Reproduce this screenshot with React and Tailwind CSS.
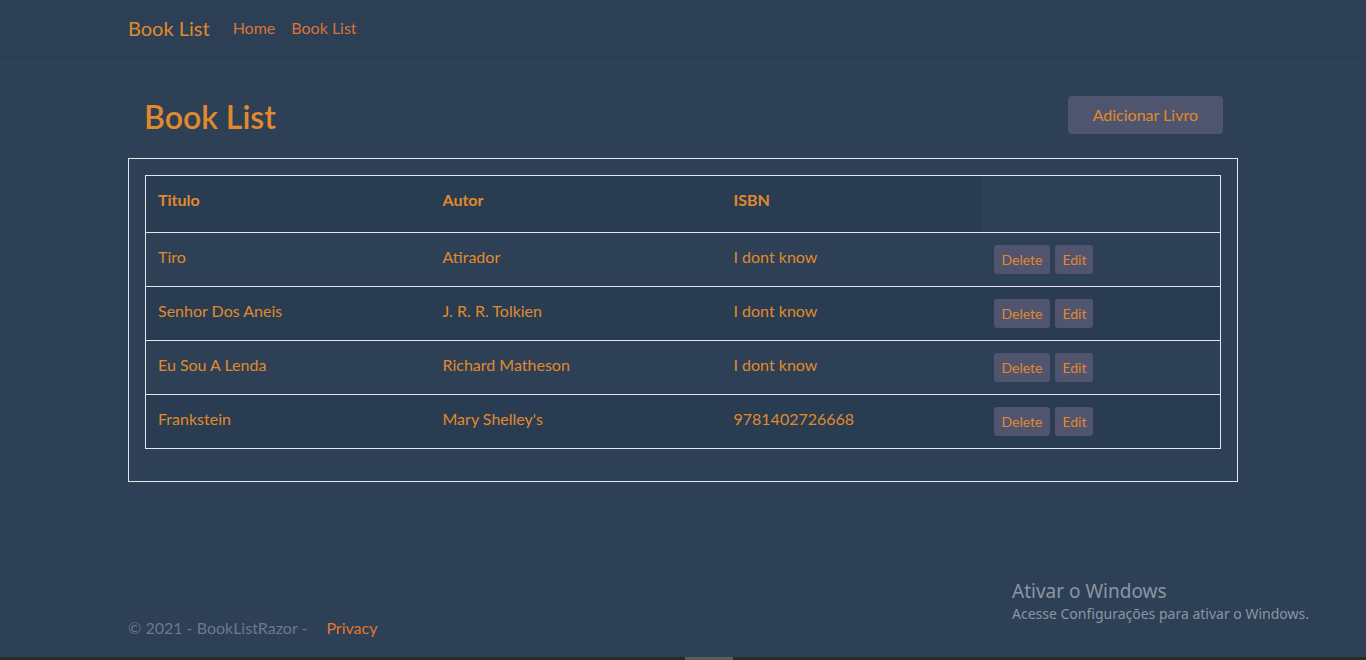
const books = [
  { title: 'Tiro', author: 'Atirador', isbn: 'I dont know' },
  { title: 'Senhor Dos Aneis', author: 'J. R. R. Tolkien', isbn: 'I dont know' },
  { title: 'Eu Sou A Lenda', author: 'Richard Matheson', isbn: 'I dont know' },
  { title: 'Frankstein', author: "Mary Shelley's", isbn: '9781402726668' },
];

const font = { fontFamily: 'Lato, "Noto Sans", sans-serif' };

export default function App() {
  return (
    <div className="relative h-[660px] overflow-hidden bg-[#2d4055] text-[#e08a2c]" style={font}>
      {/* Navbar */}
      <nav className="h-[57px] bg-[#2c3f54] shadow-[0_1px_2px_rgba(0,0,0,0.07)]">
        <div className="mx-auto flex h-full w-[1140px] items-center px-[15px] pb-[1px]">
          <span className="mr-[23px] text-[20px] text-[#e08a2c]">Book List</span>
          <a className="mr-[16px] text-[16px] text-[#d9733a]">Home</a>
          <a className="text-[16px] text-[#d9733a]">Book List</a>
        </div>
      </nav>

      <main className="mx-auto w-[1140px] px-[15px]">
        {/* Heading */}
        <div className="flex items-center justify-between pl-[16px] pr-[15px] pt-[39px] pb-[20px]">
          <h1 className="text-[32px] font-semibold leading-[40px] text-[#e08a2c]">Book List</h1>
          <button className="mb-[4px] h-[38px] rounded-[4px] bg-[#4f546f] px-[25px] text-[16px] text-[#e08a2c]">
            Adicionar Livro
          </button>
        </div>

        {/* Table box */}
        <div className="border border-[#e4e6ea] px-[16px] pt-[16px] pb-[32px]">
          <table className="w-full border-collapse border border-[#e4e6ea] text-[16px]">
            <thead>
              <tr className="h-[57px] text-left">
                <th className="w-[285px] bg-[#293c51] px-[12px] pb-[8px] font-bold">Titulo</th>
                <th className="w-[291px] bg-[#293c51] px-[12px] pb-[8px] font-bold">Autor</th>
                <th className="w-[260px] bg-[#293c51] px-[12px] pb-[8px] font-bold">ISBN</th>
                <th className="px-[12px]"></th>
              </tr>
            </thead>
            <tbody>
              {books.map((b, i) => (
                <tr
                  key={b.title}
                  className={`h-[54px] border-t border-[#e4e6ea] ${i % 2 === 0 ? 'bg-[#2d4055]' : 'bg-[#293c51]'}`}
                >
                  <td className="px-[12px] pb-[6px]">{b.title}</td>
                  <td className="px-[12px] pb-[6px]">{b.author}</td>
                  <td className="px-[12px] pb-[6px]">{b.isbn}</td>
                  <td className="px-[12px]">
                    <div className="flex gap-[5px]">
                      <button className="h-[29px] rounded-[3px] bg-[#50546f] px-[8px] text-[14px] text-[#e08a2c]">
                        Delete
                      </button>
                      <button className="h-[29px] rounded-[3px] bg-[#50546f] px-[7px] text-[14px] text-[#e08a2c]">
                        Edit
                      </button>
                    </div>
                  </td>
                </tr>
              ))}
            </tbody>
          </table>
        </div>
      </main>

      {/* Footer */}
      <footer className="absolute bottom-[20px] left-0 right-0">
        <div className="mx-auto flex w-[1140px] px-[15px] text-[16px]">
          <span className="text-[#6c7a8a]">© 2021 - BookListRazor -</span>
          <a className="ml-[19px] text-[#e0782e]">Privacy</a>
        </div>
      </footer>

      {/* Windows activation watermark */}
      <div className="absolute left-[1012px] top-[578px] text-[#8a96a4]" style={{ fontFamily: '"Noto Sans", sans-serif' }}>
        <div className="text-[19px] leading-[26px]">Ativar o Windows</div>
        <div className="text-[14px] leading-[20px]">Acesse Configurações para ativar o Windows.</div>
      </div>

      {/* bottom scroll strip */}
      <div className="absolute bottom-0 left-0 right-0 flex h-[3px] bg-[#2b2a25]">
        <div className="ml-[685px] h-full w-[48px] bg-[#5d5c57]" />
      </div>
    </div>
  );
}
